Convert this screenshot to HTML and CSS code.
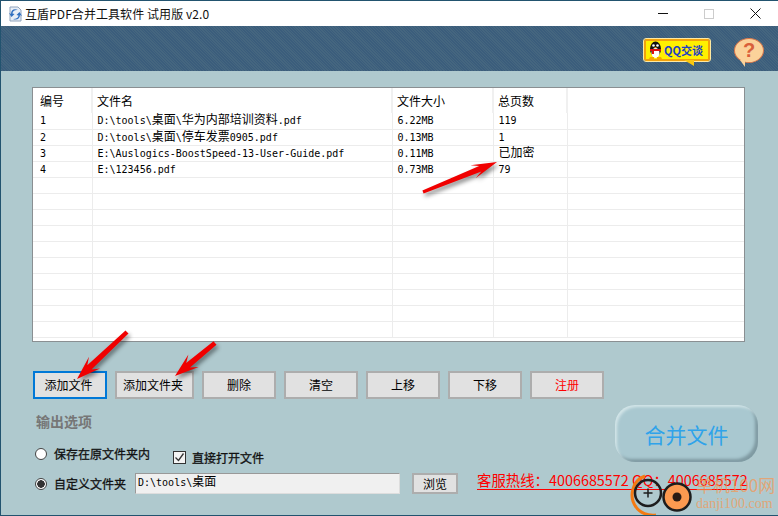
FILE: index.html
```html
<!DOCTYPE html>
<html lang="zh-CN">
<head>
  <meta charset="UTF-8">
  <title>互盾PDF合并工具软件 试用版 v2.0</title>
  <link rel="stylesheet" href="styles.css">
</head>
<body>
  <div class="window">
    <div class="titlebar">
      <svg class="app-icon" width="16" height="16" viewBox="0 0 16 16">
        <path d="M3 1h8l3 3v11H3z" fill="#e8eef6" stroke="#8fa3bd"/>
        <path d="M11 4c-4-2-7 0-7 4l-2-1 2.500 4 3-3-2-.5c0-2 2-4 5.500-3.500z" fill="#2f6fc0"/>
        <path d="M6 13c4 1.500 7-.5 7-4l2 1-2.500-4-3 3 2 .5c0 2-2 3.500-5.500 3.500z" fill="#2f6fc0"/>
      </svg>
      <span class="title-text">互盾PDF合并工具软件 试用版 v2.0</span>
      <div class="win-controls">
        <span class="win-btn"><span class="win-min"></span></span>
        <span class="win-btn"><span class="win-max"></span></span>
        <span class="win-btn">
          <svg width="11" height="11" viewBox="0 0 11 11"><path d="M.5 .5l10 10M10.500 .5l-10 10" stroke="#111" fill="none"/></svg>
        </span>
      </div>
    </div>

    <div class="banner">
      <div class="qq-badge">
        <svg class="penguin" width="15" height="19" viewBox="0 0 15 19">
          <ellipse cx="7.500" cy="8" rx="5.500" ry="7.500" fill="#111"/>
          <ellipse cx="7.500" cy="12" rx="4" ry="5" fill="#fff"/>
          <circle cx="5.500" cy="4.500" r="1.300" fill="#fff"/>
          <circle cx="9.500" cy="4.500" r="1.300" fill="#fff"/>
          <path d="M6 6h3l-1.500 1.200z" fill="#f5a800"/>
          <path d="M2 8h11v2H6v3H4v-3H2z" fill="#e01010"/>
          <path d="M2 16h4v2H1zM9 16h4l1 2H9z" fill="#f5a800"/>
        </svg>
        <span class="qq-text">QQ交谈</span>
        <span class="qq-tail"></span>
      </div>
      <div class="help-bubble">
        <span class="help-mark">?</span>
        <span class="help-tail"></span>
      </div>
    </div>

    <div class="main">
      <div class="file-list">
        <table>
          <colgroup>
            <col class="col-no"><col class="col-name"><col class="col-size"><col class="col-pages"><col>
          </colgroup>
          <thead>
            <tr><th>编号</th><th>文件名</th><th>文件大小</th><th>总页数</th><th></th></tr>
          </thead>
          <tbody>
            <tr><td>1</td><td>D:\tools\<span class="cn">桌面</span>\<span class="cn">华为内部培训资料</span>.pdf</td><td>6.22MB</td><td>119</td><td></td></tr>
            <tr><td>2</td><td>D:\tools\<span class="cn">桌面</span>\<span class="cn">停车发票</span>0905.pdf</td><td>0.13MB</td><td>1</td><td></td></tr>
            <tr><td>3</td><td>E:\Auslogics-BoostSpeed-13-User-Guide.pdf</td><td>0.11MB</td><td><span class="cn">已加密</span></td><td></td></tr>
            <tr><td>4</td><td>E:\123456.pdf</td><td>0.73MB</td><td>79</td><td></td></tr>
            <tr><td></td><td></td><td></td><td></td><td></td></tr>
            <tr><td></td><td></td><td></td><td></td><td></td></tr>
            <tr><td></td><td></td><td></td><td></td><td></td></tr>
            <tr><td></td><td></td><td></td><td></td><td></td></tr>
            <tr><td></td><td></td><td></td><td></td><td></td></tr>
            <tr><td></td><td></td><td></td><td></td><td></td></tr>
            <tr><td></td><td></td><td></td><td></td><td></td></tr>
            <tr><td></td><td></td><td></td><td></td><td></td></tr>
            <tr><td></td><td></td><td></td><td></td><td></td></tr>
            <tr><td></td><td></td><td></td><td></td><td></td></tr>
          </tbody>
        </table>
      </div>

      <div class="toolbar">
        <button class="btn btn-focus">添加文件</button>
        <button class="btn btn-wide">添加文件夹</button>
        <button class="btn">删除</button>
        <button class="btn">清空</button>
        <button class="btn">上移</button>
        <button class="btn">下移</button>
        <button class="btn btn-reg">注册</button>
      </div>

      <div class="bottom">
        <div class="options">
          <div class="options-title">输出选项</div>
          <div class="opt-row opt-row-first">
            <span class="radio"></span>
            <span class="opt-label">保存在原文件夹内</span>
            <span class="checkbox">
              <svg width="11" height="11" viewBox="0 0 11 11"><path d="M1.500 5.500l3 3 5-7" stroke="#333" stroke-width="1.300" fill="none"/></svg>
            </span>
            <span class="opt-label">直接打开文件</span>
          </div>
          <div class="opt-row opt-row-second">
            <span class="radio radio-on"></span>
            <span class="opt-label">自定义文件夹</span>
            <div class="path-input">D:\tools\<span class="cn">桌面</span></div>
            <button class="btn btn-browse">浏览</button>
          </div>
        </div>
        <div class="side">
          <button class="merge-btn">合并文件</button>
          <div class="hotline">客服热线：4006685572 QQ：4006685572</div>
        </div>
      </div>
    </div>

    <svg class="arrows" width="778" height="516" viewBox="0 0 778 516">
      <polygon points="128.500,333.600 91.500,369.600 100,368.400 77,379 89,356.800 87.300,365.200 125.500,330.400" fill="#f00000"/>
      <polygon points="216.500,344.800 190,367.400 198.600,366.900 175,376 188.400,354.500 186.200,363 213.500,341.200" fill="#f00000"/>
      <polygon points="423.600,193.400 481.400,171.600 475.600,178.300 497,162 470.400,165.300 479.200,166 422.400,190.600" fill="#f00000"/>
    </svg>

    <div class="watermark">
      <svg class="wm-logo" width="62" height="44" viewBox="0 0 62 44">
        <path d="M15 2C3 6-2 22 6 33c4 6 12 9 20 8" stroke="#f47a12" stroke-width="3" fill="none"/>
        <circle cx="18" cy="19" r="13" stroke="#1d1d1d" stroke-width="2.500" fill="none"/>
        <path d="M13.500 19h9M18 14.500v9" stroke="#1d1d1d" stroke-width="1.500"/>
        <circle cx="47" cy="23" r="13.500" fill="#fb9a50" stroke="#1d1d1d" stroke-width="2.500"/>
        <circle cx="47" cy="23" r="4.500" fill="#2a1c14"/>
      </svg>
      <div class="wm-text">
        <div class="wm-cn">单机100网</div>
        <div class="wm-en">danji100.com</div>
      </div>
    </div>
  </div>
</body>
</html>
```

FILE: styles.css
```css
html, body {
  margin: 0;
  padding: 0;
  height: 516px;
  overflow: hidden;
}
body {
  font-family: "Noto Sans CJK SC", "Liberation Sans", sans-serif;
  font-size: 12px;
  color: #000;
}
.window {
  position: relative;
  width: 778px;
  height: 516px;
  box-sizing: border-box;
  border-top: 1px solid #22536f;
  border-left: 1px solid #22536f;
  border-bottom: 1px solid #22536f;
  background: #afc9ce;
  overflow: hidden;
}

/* title bar */
.titlebar {
  display: flex;
  align-items: center;
  height: 25px;
  background: #fff;
  padding-left: 6px;
}
.app-icon {
  margin-right: 2px;
}
.title-text {
  font-size: 12px;
  line-height: 25px;
  letter-spacing: 0.07px;
  color: #111;
}
.win-controls {
  margin-left: auto;
  display: flex;
}
.win-btn {
  width: 46px;
  height: 25px;
  display: flex;
  align-items: center;
  justify-content: center;
}
.win-min {
  width: 10px;
  height: 1px;
  background: #111;
}
.win-max {
  width: 8px;
  height: 8px;
  border: 1px solid #ccc;
}

/* dark banner */
.banner {
  height: 45px;
  box-sizing: border-box;
  background: repeating-linear-gradient(45deg, #3b5d7c 0, #3b5d7c 1px, #45667f 1px, #45667f 2px);
  display: flex;
  justify-content: flex-end;
  align-items: flex-start;
  padding: 12px 14px 0 0;
}
.qq-badge {
  position: relative;
  width: 66px;
  height: 22px;
  box-sizing: border-box;
  background: #fff000;
  border: 2px solid #f2a20c;
  border-radius: 2px;
  outline: 1px solid #ffe9a0;
  display: flex;
  align-items: center;
  margin-top: 1px;
  padding-left: 2px;
  margin-right: 24px;
}
.penguin {
  flex: none;
}
.qq-text {
  font-size: 11px;
  font-weight: 700;
  line-height: 14px;
  color: #1c3fc4;
  margin-left: 1px;
  white-space: nowrap;
}
.qq-tail {
  position: absolute;
  right: 14px;
  bottom: -7px;
  width: 0;
  height: 0;
  border-top: 6px solid #f9c80e;
  border-left: 10px solid transparent;
}
.help-bubble {
  position: relative;
  width: 30px;
  height: 25px;
  box-sizing: border-box;
  border-radius: 50%;
  background: #fbd29a;
  border: 1px solid #d9764a;
  text-align: center;
}
.help-mark {
  font-family: "Liberation Sans", sans-serif;
  font-size: 20px;
  font-weight: 700;
  line-height: 23px;
  color: #d9603a;
}
.help-tail {
  position: absolute;
  left: 5px;
  bottom: -5px;
  width: 0;
  height: 0;
  border-top: 7px solid #fbd29a;
  border-left: 5px solid transparent;
}

/* main area */
.main {
  padding: 16px 0 0 31px;
}
.file-list {
  width: 713px;
  height: 255px;
  box-sizing: border-box;
  border: 1px solid #8a8f92;
  background: #fff;
  overflow: hidden;
}
.file-list table {
  width: 711px;
  border-collapse: collapse;
  table-layout: fixed;
}
.col-no { width: 59px; }
.col-name { width: 300px; }
.col-size { width: 101px; }
.col-pages { width: 74px; }
.file-list th {
  height: 25px;
  padding: 0 0 0 4px;
  font-size: 12px;
  font-weight: 400;
  line-height: 16px;
  text-align: left;
  border-right: 2px solid #f0f0f0;
  box-sizing: border-box;
}
.file-list th:first-child { padding-left: 7px; }
.file-list th:last-child { border-right: none; }
.file-list td {
  height: 16px;
  padding: 0 0 0 5px;
  box-sizing: border-box;
  font-family: "DejaVu Sans Mono", monospace;
  font-size: 10px;
  line-height: 15px;
  white-space: nowrap;
  border-right: 1px solid #ececec;
  border-bottom: 1px solid #ececec;
}
.file-list td:first-child { padding-left: 7px; }
.file-list td:last-child { border-right: none; }
.cn {
  font-family: "Noto Sans CJK SC", sans-serif;
  font-size: 12px;
  line-height: 0;
}

/* buttons */
.toolbar {
  display: flex;
  gap: 8px;
  margin-top: 29px;
  margin-left: 1px;
}
.btn {
  width: 74px;
  height: 28px;
  box-sizing: border-box;
  background: #e1e1e1;
  border: 2px solid #adadad;
  padding: 0;
  font-family: inherit;
  font-size: 12px;
  line-height: 16px;
  color: #000;
}
.btn-focus {
  border-color: #0078d7;
  padding-right: 3px;
}
.btn-wide {
  width: 79px;
  padding-right: 3px;
}
.btn-reg { color: #f00; }
.btn-browse {
  width: 46px;
  height: 21px;
  margin-left: 12px;
}

/* bottom options */
.bottom {
  display: flex;
  gap: 19px;
}
.options {
  width: 426px;
}
.options-title {
  margin-top: 14px;
  margin-left: 4px;
  font-size: 14px;
  font-weight: 700;
  line-height: 16px;
  color: #767676;
}
.opt-row {
  display: flex;
  align-items: center;
}
.opt-row-first {
  height: 20px;
  margin-top: 15px;
}
.opt-row-second {
  height: 21px;
  margin-top: 9px;
}
.radio {
  width: 12px;
  height: 12px;
  box-sizing: border-box;
  margin: 0 7px 0 3px;
  border: 1px solid #444;
  border-radius: 50%;
  background: #fff;
  flex: none;
}
.radio-on {
  background: radial-gradient(circle, #333 0, #333 3.500px, #fff 4px);
}
.opt-label {
  font-size: 12px;
  line-height: 16px;
  -webkit-text-stroke: 0.3px #111;
  white-space: nowrap;
  color: #111;
}
.checkbox {
  width: 13px;
  height: 13px;
  box-sizing: border-box;
  margin: 7px 6px 0 23px;
  border: 1px solid #333;
  background: #f4f4f4;
  display: flex;
  align-items: center;
  justify-content: center;
  flex: none;
}
.opt-row-first .checkbox + .opt-label {
  margin-top: 7px;
}
.path-input {
  width: 265px;
  height: 21px;
  box-sizing: border-box;
  margin-left: 9px;
  padding-left: 2px;
  background: #f0f0f0;
  border: 1px solid #999;
  border-bottom-color: #ddd;
  border-right-color: #ddd;
  font-family: "DejaVu Sans Mono", monospace;
  font-size: 10px;
  line-height: 17px;
}
.side {
  width: 281px;
  display: flex;
  flex-direction: column;
}
.merge-btn {
  align-self: flex-end;
  width: 143px;
  height: 57px;
  margin-top: 6px;
  box-sizing: border-box;
  border-radius: 20px;
  border: none;
  box-shadow: inset 2px 2px 3px #d3e5e8, inset -3px -3px 3px #7f9aa2;
  background: #a9c8d0;
  color: #2fa3ea;
  font-family: inherit;
  font-size: 21px;
  line-height: 28px;
  padding: 0;
}
.hotline {
  margin-top: 9px;
  width: 270px;
  height: 19px;
  box-sizing: border-box;
  border-bottom: 1px solid #f00;
  color: #f00;
  font-size: 14.400px;
  line-height: 18px;
  white-space: nowrap;
}

/* overlays */
.arrows {
  position: absolute;
  left: -1px;
  top: -1px;
  filter: drop-shadow(2px 3px 2px rgba(0,0,0,0.45));
  pointer-events: none;
}
.watermark {
  position: absolute;
  left: 629px;
  top: 473px;
  display: flex;
  pointer-events: none;
}
.wm-logo {
  flex: none;
}
.wm-text {
  margin-left: 4px;
  color: rgba(247, 150, 80, 0.7);
  white-space: nowrap;
}
.wm-cn {
  font-size: 17px;
  line-height: 22px;
}
.wm-en {
  font-family: "Liberation Serif", serif;
  font-size: 14px;
  line-height: 16px;
}
```
